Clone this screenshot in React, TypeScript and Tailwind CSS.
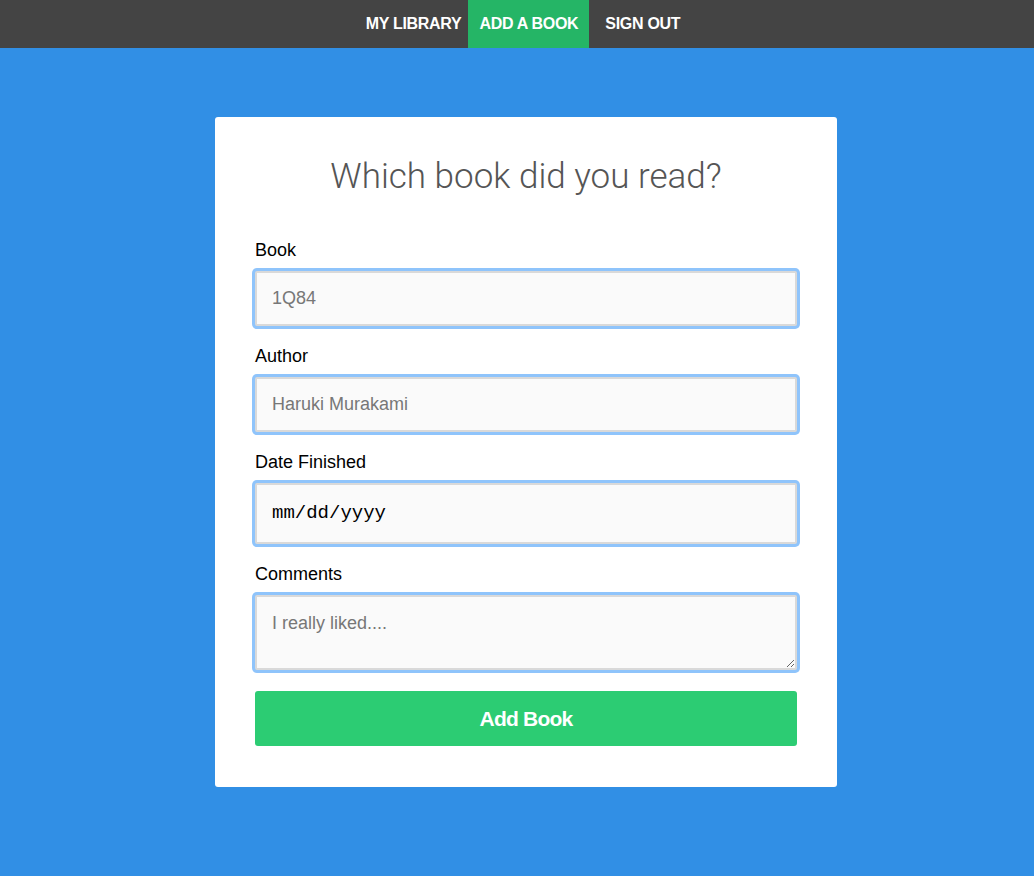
import React from "react";

const inputCls =
  "block w-full border-2 border-[#d9d9d9] bg-[#fafafa] rounded-[2px] ring-[3px] ring-[#8fc4fb] outline-none px-[15px] text-[18px] text-[#333] placeholder:text-[#777] font-['Liberation_Sans',Arial,sans-serif]";

const labelCls = "block text-[18px] leading-[24px] text-black";

export default function App() {
  return (
    <div className="min-h-[876px] bg-[#318fe5] font-['Liberation_Sans',Arial,sans-serif]">
      <nav className="h-[48px] bg-[#444444] flex justify-center pl-[12px]">
        <a className="flex items-center pl-[11px] pr-[7px] text-white font-bold text-[16px] tracking-[-0.3px]">MY LIBRARY</a>
        <a className="flex items-center px-[11px] bg-[#25b566] text-white font-bold text-[16px] tracking-[-0.3px]">ADD A BOOK</a>
        <a className="flex items-center pl-[16px] pr-[11px] text-white font-bold text-[16px] tracking-[-0.3px]">SIGN OUT</a>
      </nav>
      <div className="flex justify-center pt-[69px] pl-[18px]">
        <div className="w-[622px] bg-white rounded-[3px] px-[40px] pt-[40px] pb-[41px]">
          <h1 className="text-center text-[35px] leading-[40px] font-light text-[#555] font-['Roboto',sans-serif]">
            Which book did you read?
          </h1>
          <form className="mt-[41px]" onSubmit={(e) => e.preventDefault()}>
            <label className={labelCls}>Book</label>
            <div className="mt-[9px]">
              <input className={inputCls + " h-[55px]"} placeholder="1Q84" />
            </div>
            <label className={labelCls + " mt-[18px]"}>Author</label>
            <div className="mt-[9px]">
              <input className={inputCls + " h-[55px]"} placeholder="Haruki Murakami" />
            </div>
            <label className={labelCls + " mt-[18px]"}>Date Finished</label>
            <div className="mt-[9px]">
              <div className="flex items-center w-full h-[61px] border-2 border-[#d9d9d9] bg-[#fafafa] rounded-[2px] ring-[3px] ring-[#8fc4fb] px-[15px] text-[19px] text-black font-['Liberation_Mono',monospace]">
                mm/dd/yyyy
              </div>
            </div>
            <label className={labelCls + " mt-[18px]"}>Comments</label>
            <div className="mt-[9px]">
              <textarea
                className={inputCls + " h-[75px] pt-[16px] pb-[12px] leading-[20px]"}
                placeholder="I really liked...."
              />
            </div>
            <button
              type="submit"
              className="mt-[21px] block w-full h-[55px] rounded-[3px] bg-[#2ccc73] text-white text-[21px] font-bold tracking-[-0.8px]"
            >
              Add Book
            </button>
          </form>
        </div>
      </div>
    </div>
  );
}
